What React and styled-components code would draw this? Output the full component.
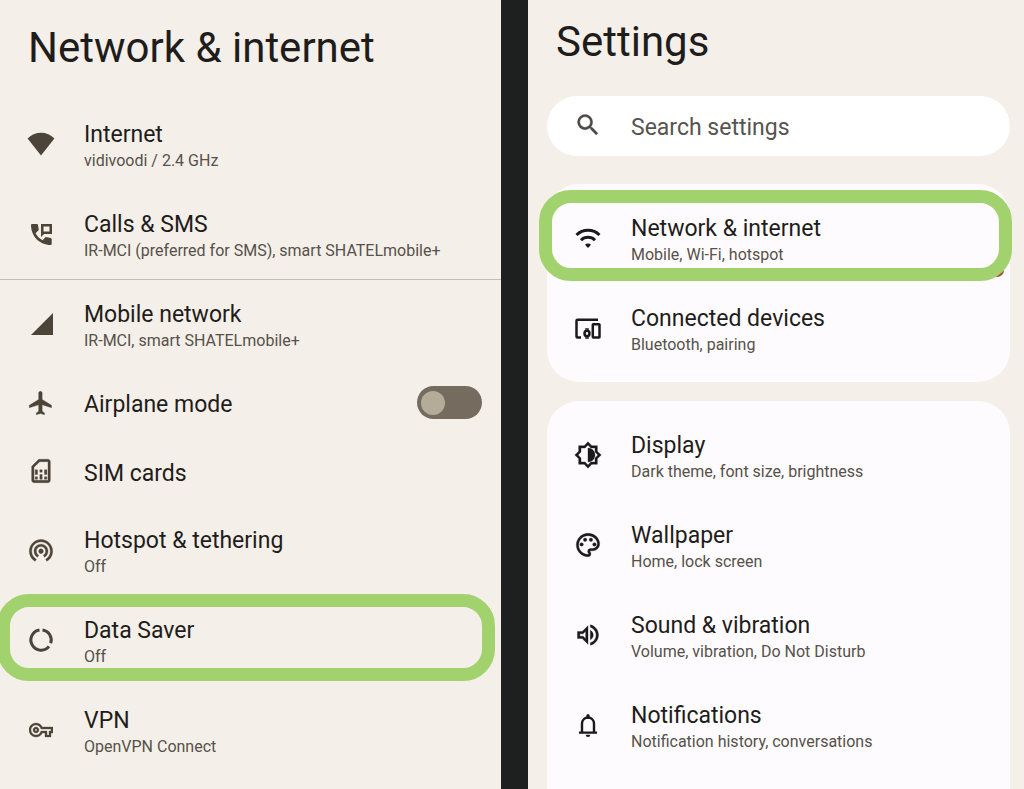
import React from 'react'
import styled, { createGlobalStyle } from 'styled-components'
import {
  MdFlight,
  MdOutlineSimCard,
  MdWifiTethering,
  MdOutlineVpnKey,
  MdSearch,
  MdOutlineBrightnessMedium,
  MdOutlinePalette,
  MdOutlineVolumeUp,
} from 'react-icons/md'

const GlobalStyle = createGlobalStyle`
  * {
    box-sizing: border-box;
  }
  body {
    margin: 0;
    background: #f4efe8;
    font-family: Roboto, sans-serif;
    color: #1f1d1b;
  }
  h1, ul {
    margin: 0;
    padding: 0;
  }
`

const Screens = styled.div`
  display: grid;
  grid-template-columns: minmax(0, 501fr) 27px minmax(0, 496fr);
  height: 100vh;
  overflow: hidden;
`

const Divider = styled.div`
  background: #1e2020;
`

const Panel = styled.main`
  overflow: hidden;
  background: #f4efe8;
`

const Title = styled.h1`
  padding: ${(props) => props.$padding};
  font-size: 42px;
  line-height: 48px;
  font-weight: 400;
`

const List = styled.ul`
  list-style: none;
`

const Row = styled.li`
  position: relative;
  display: grid;
  grid-template-columns: 84px 1fr auto;
  align-items: center;
  min-height: ${(props) => (props.$single ? '68px' : '90px')};
  padding-right: 19px;
  border-bottom: ${(props) => (props.$divided ? '1px solid #c2beb9' : 'none')};
`

const IconBox = styled.span`
  display: flex;
  justify-content: center;
  padding: 0 2px 2px 0;
  color: ${(props) => props.$color || '#4b4439'};

  svg {
    display: block;
    width: ${(props) => props.$size || 28}px;
    height: ${(props) => props.$size || 28}px;
  }
  /* the icon set ships with stroke-width 0, a thin stroke makes it bolder */
  svg[stroke-width='0'] {
    stroke-width: 0.3px;
  }
  svg[stroke-width='0'] path[fill='none'] {
    stroke: none;
  }
`

const RowLink = styled.a`
  padding-top: 4px;
  color: inherit;
  text-decoration: none;
`

const Name = styled.span`
  display: block;
  padding-top: ${(props) => (props.$alone ? '2px' : '0')};
  font-size: 23px;
  line-height: 28px;
`

const Summary = styled.span`
  display: block;
  font-size: 16px;
  line-height: 24px;
  color: #56514a;
`

const Highlight = styled.span`
  position: absolute;
  inset: ${(props) => props.$inset};
  border: 13px solid #a1d26e;
  border-radius: 32px;
  pointer-events: none;
`

const Badge = styled.span`
  position: absolute;
  right: 6px;
  bottom: 7px;
  width: 14px;
  height: 14px;
  border-radius: 50%;
  background: #a8493a;
`

const Switch = styled.input`
  appearance: none;
  display: flex;
  align-items: center;
  width: 65px;
  height: 33px;
  margin: 0 0 3px;
  padding: 0 4px;
  border-radius: 17px;
  background: #756b5e;

  &::before {
    content: '';
    width: 24px;
    height: 24px;
    border-radius: 50%;
    background: #b4ab99;
  }
  &:checked {
    justify-content: flex-end;
  }
`

const SearchBar = styled.label`
  display: grid;
  grid-template-columns: 84px 1fr;
  align-items: center;
  height: 60px;
  margin: 0 14px 28px 19px;
  border-radius: 30px;
  background: #ffffff;
`

const SearchInput = styled.input`
  width: 100%;
  padding: 4px 0 0;
  border: none;
  outline: none;
  background: transparent;
  font: inherit;
  font-size: 23px;
  line-height: 28px;

  &::placeholder {
    color: #56544f;
    opacity: 1;
  }
`

const Card = styled.section`
  margin: 0 14px 19px 19px;
  padding: 10px 0 ${(props) => (props.$last ? '64px' : '8px')};
  border-radius: 32px;
  background: #fdfbfd;
`

function WifiFullIcon() {
  return (
    <svg viewBox="0 0 28 28" fill="currentColor">
      <path d="M14 25.5L.6 8.400C4.400 4.800 9 2.800 14 2.800s9.600 2 13.400 5.600z" />
    </svg>
  )
}

function CallsIcon() {
  return (
    <svg viewBox="0 0 28 28" fill="currentColor">
      <path d="M4 5a1 1 0 0 1 1-1h5a1 1 0 0 1 1 .9l.8 5-3.300 3.300c1.600 3 3.900 5.300 7 7l3.200-3.300 5 1c.6.1 1 .6 1 1V24a1 1 0 0 1-1 1C12.500 25 4 16 4 5z" />
      <path fillRule="evenodd" d="M14 4h11v10h-8l-3 3zM16.500 6.500v5h6v-5z" />
    </svg>
  )
}

function SignalIcon() {
  return (
    <svg viewBox="0 0 28 28" fill="currentColor">
      <path d="M4 25L26 3v22z" />
    </svg>
  )
}

function DataSaverIcon() {
  return (
    <svg viewBox="0 0 28 28" fill="none" stroke="currentColor" strokeWidth="3">
      <path d="M15.500 3.900A10.200 10.200 0 0 1 23.700 17.300" />
      <path d="M22 20.400A10.200 10.200 0 1 1 12.500 3.900" />
    </svg>
  )
}

function WifiIcon() {
  return (
    <svg viewBox="0 0 28 28" fill="none" stroke="currentColor" strokeWidth="3">
      <path d="M2.500 11a16.500 16.500 0 0 1 23 0" />
      <path d="M7 16.200a10 10 0 0 1 14 0" />
      <path d="M14 24l-3-3.200a4.200 4.200 0 0 1 6 0z" fill="currentColor" stroke="none" />
    </svg>
  )
}

function DevicesIcon() {
  return (
    <svg viewBox="0 0 28 28" fill="none" stroke="currentColor" strokeWidth="2.500">
      <path d="M24 5.800H3.500a1 1 0 0 0-1 1v15.700a1 1 0 0 0 1 1H7" />
      <rect x="18.800" y="10.300" width="6.700" height="13.200" rx=".5" />
      <ellipse cx="13" cy="19.500" rx="2.500" ry="2.700" />
      <path d="M11.200 15h3.600M11.200 24h3.600" strokeWidth="1.600" />
    </svg>
  )
}

function BellIcon() {
  return (
    <svg viewBox="0 0 28 28" fill="none" stroke="currentColor" strokeWidth="2.400">
      <path d="M5 21.600h18M8 21.600V12.500a6 6 0 0 1 12 0v9.100" />
      <path d="M14 4.500v2" strokeWidth="3.200" strokeLinecap="round" />
      <path d="M11.700 23.800h4.600a2.300 2.300 0 0 1-4.600 0z" fill="currentColor" stroke="none" />
    </svg>
  )
}

const networkItems = [
  { text: 'Internet', summary: 'vidivoodi / 2.4 GHz', icon: <WifiFullIcon /> },
  {
    text: 'Calls & SMS',
    summary: 'IR-MCI (preferred for SMS), smart SHATELmobile+',
    icon: <CallsIcon />,
    divided: true,
  },
  { text: 'Mobile network', summary: 'IR-MCI, smart SHATELmobile+', icon: <SignalIcon /> },
  { text: 'Airplane mode', icon: <MdFlight />, toggle: true },
  { text: 'SIM cards', icon: <MdOutlineSimCard /> },
  { text: 'Hotspot & tethering', summary: 'Off', icon: <MdWifiTethering /> },
  { text: 'Data Saver', summary: 'Off', icon: <DataSaverIcon />, highlight: '-2px 6px 5px -3px' },
  { text: 'VPN', summary: 'OpenVPN Connect', icon: <MdOutlineVpnKey />, iconSize: 24 },
]

const connectionItems = [
  {
    text: 'Network & internet',
    summary: 'Mobile, Wi-Fi, hotspot',
    icon: <WifiIcon />,
    highlight: '-4px -2px 3px -8px',
    badge: true,
  },
  { text: 'Connected devices', summary: 'Bluetooth, pairing', icon: <DevicesIcon /> },
]

const deviceItems = [
  { text: 'Display', summary: 'Dark theme, font size, brightness', icon: <MdOutlineBrightnessMedium /> },
  { text: 'Wallpaper', summary: 'Home, lock screen', icon: <MdOutlinePalette /> },
  { text: 'Sound & vibration', summary: 'Volume, vibration, Do Not Disturb', icon: <MdOutlineVolumeUp /> },
  { text: 'Notifications', summary: 'Notification history, conversations', icon: <BellIcon /> },
]

function SettingsList({ items, iconColor }) {
  return (
    <List>
      {items.map((item) => (
        <Row key={item.text} $single={!item.summary} $divided={item.divided}>
          <IconBox $color={iconColor} $size={item.iconSize}>{item.icon}</IconBox>
          {item.toggle ? (
            <>
              <Name as="label" htmlFor="airplane" $alone>{item.text}</Name>
              <Switch id="airplane" type="checkbox" role="switch" />
            </>
          ) : (
            <RowLink href="#">
              <Name>{item.text}</Name>
              {item.summary && <Summary>{item.summary}</Summary>}
            </RowLink>
          )}
          {item.badge && <Badge />}
          {item.highlight && <Highlight $inset={item.highlight} />}
        </Row>
      ))}
    </List>
  )
}

const App = () => {
  return (
    <>
      <GlobalStyle />
      <Screens>
        <Panel>
          <Title $padding="24px 28px 28px">Network & internet</Title>
          <SettingsList items={networkItems} />
        </Panel>
        <Divider />
        <Panel as="section">
          <Title $padding="18px 28px 30px">Settings</Title>
          <SearchBar>
            <IconBox $color="#4a4844">
              <MdSearch />
            </IconBox>
            <SearchInput type="search" placeholder="Search settings" aria-label="Search settings" />
          </SearchBar>
          <Card>
            <SettingsList items={connectionItems} iconColor="#1b1a1b" />
          </Card>
          <Card $last>
            <SettingsList items={deviceItems} iconColor="#1b1a1b" />
          </Card>
        </Panel>
      </Screens>
    </>
  )
}

export default App
